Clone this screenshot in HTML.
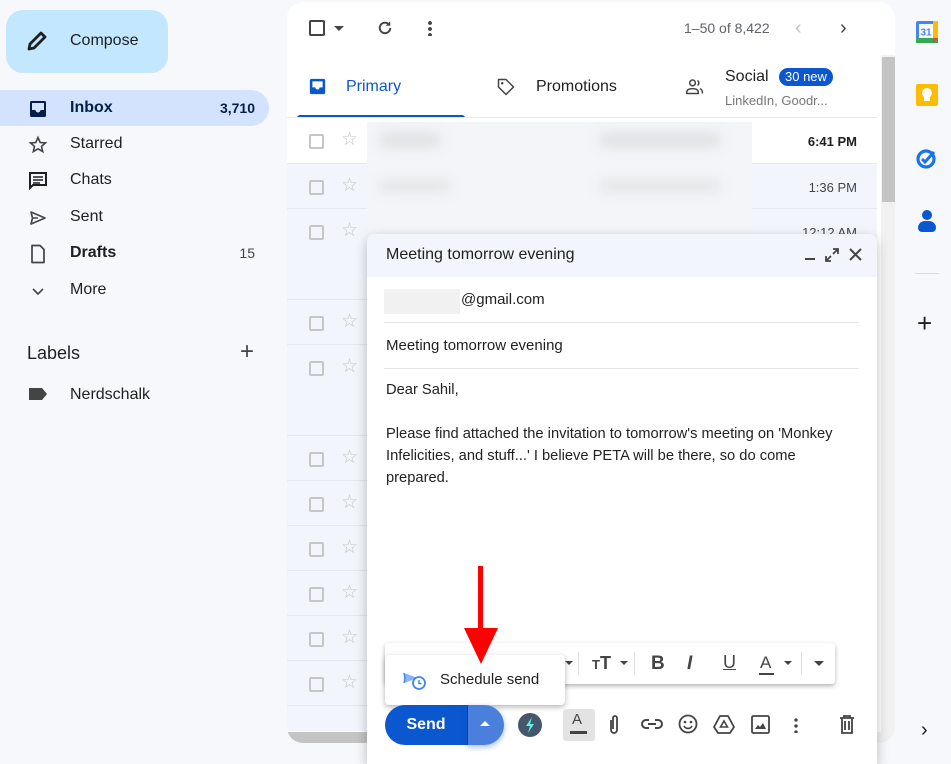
<!DOCTYPE html>
<html><head><meta charset="utf-8">
<style>
*{box-sizing:border-box;margin:0;padding:0}
body{width:951px;height:757px;overflow:hidden;background:#f6f8fc;font-family:"Liberation Sans",Arial,sans-serif;color:#1f1f1f;position:relative}
.abs{position:absolute}
.nav{position:absolute;left:0;width:269px;height:36px;display:flex;align-items:center;font-size:16px;color:#1f1f1f}
.nav .ic{position:absolute;left:28px;top:9px;width:20px;height:20px}
.nav .t{position:absolute;left:70px}
.nav .n{position:absolute;right:14px;font-size:14px}
.row{position:absolute;left:287px;width:590px;border-bottom:1px solid #e6e9ef;background:#f2f6fc}
.cb{position:absolute;left:22px;top:16px;width:15px;height:15px;border:2px solid #c4c7c5;border-radius:2px}
.st{position:absolute;left:54px;top:12px;font-size:19px;color:#c4c7c5;line-height:20px}
.time{position:absolute;right:20px;top:16px;font-size:13px;color:#444}
svg{display:block}
</style></head><body>

<div class="abs" style="left:6px;top:10px;width:162px;height:63px;background:#c2e7ff;border-radius:17px"></div>
<svg class="abs" style="left:25px;top:29px" width="24" height="24" viewBox="0 0 24 24"><path d="M4 20l1-5L16 4l4 4L9 19z" fill="none" stroke="#1f1f1f" stroke-width="2.8" stroke-linejoin="round"/></svg>
<div class="abs" style="left:70px;top:32px;font-size:16px;color:#1f1f1f">Compose</div>

<div class="nav" style="top:90px;background:#d3e3fd;border-radius:0 18px 18px 0">
 <svg class="ic" viewBox="0 0 20 20"><rect x="2" y="2" width="16" height="16" rx="1.5" fill="#041e49"/><path d="M4 4h12v7h-3.5a2.5 2.5 0 0 1-5 0H4z" fill="#d3e3fd"/></svg>
 <span class="t" style="font-weight:bold;color:#041e49">Inbox</span><span class="n" style="font-weight:bold;color:#041e49">3,710</span></div>
<div class="nav" style="top:126px"><svg class="ic" viewBox="0 0 20 20"><path d="M10 2.5l2.2 5 5.3.4-4 3.5 1.2 5.2L10 13.8 5.3 16.6l1.2-5.2-4-3.5 5.3-.4z" fill="none" stroke="#444" stroke-width="1.6"/></svg><span class="t">Starred</span></div>
<div class="nav" style="top:162px"><svg class="ic" viewBox="0 0 20 20"><path d="M2 2h16v12H5l-3 3z" fill="none" stroke="#1f1f1f" stroke-width="2"/><path d="M5 6h10M5 9h10M5 12h7" stroke="#1f1f1f" stroke-width="1.5"/></svg><span class="t">Chats</span></div>
<div class="nav" style="top:199px"><svg class="ic" viewBox="0 0 20 20"><path d="M3 4l14 6-14 6 1.5-6z" fill="none" stroke="#444" stroke-width="1.6" stroke-linejoin="round"/><path d="M4.5 10H10" stroke="#444" stroke-width="1.5"/></svg><span class="t">Sent</span></div>
<div class="nav" style="top:235px"><svg class="ic" viewBox="0 0 20 20"><path d="M4 1.5h8l4 4V18.5H4z" fill="none" stroke="#444" stroke-width="1.7" stroke-linejoin="round"/></svg><span class="t" style="font-weight:bold">Drafts</span><span class="n" style="color:#444">15</span></div>
<div class="nav" style="top:272px"><svg class="ic" viewBox="0 0 20 20"><path d="M5 8l5 5 5-5" fill="none" stroke="#444" stroke-width="1.6"/></svg><span class="t">More</span></div>
<div class="abs" style="left:27px;top:343px;font-size:18px;color:#1f1f1f">Labels</div>
<div class="abs" style="left:240px;top:340px;font-size:24px;color:#444;line-height:24px">+</div>
<svg class="abs" style="left:28px;top:387px" width="20" height="14" viewBox="0 0 20 14"><path d="M1 1h13l5 6-5 6H1z" fill="#444"/></svg>
<div class="abs" style="left:70px;top:386px;font-size:16px">Nerdschalk</div>

<div class="abs" style="left:287px;top:2px;width:608px;height:741px;background:#fff;border-radius:16px;overflow:hidden">
 <div class="abs" style="left:594px;top:53px;width:14px;height:690px;background:#f1f1f1"></div>
 <div class="abs" style="left:595px;top:55px;width:13px;height:145px;background:#c4c4c4"></div>
 <div class="abs" style="left:0;top:730px;width:594px;height:11px;background:#f1f1f1"></div>
 <div class="abs" style="left:0;top:730px;width:83px;height:11px;background:#c4c4c4;border-radius:0 0 0 8px"></div>
</div>
<div class="abs" style="left:309px;top:20px;width:16px;height:16px;border:2px solid #444;border-radius:2px"></div>
<div class="abs" style="left:334px;top:26px;width:0;height:0;border-left:5px solid transparent;border-right:5px solid transparent;border-top:5px solid #444"></div>
<svg class="abs" style="left:376px;top:19px" width="18" height="18" viewBox="0 0 24 24"><path d="M19 12a7 7 0 1 1-2-5" fill="none" stroke="#444" stroke-width="2.6"/><path d="M19 3v6h-6z" fill="#444"/></svg>
<div class="abs" style="left:428px;top:20px;width:4px;height:16px;background:radial-gradient(circle,#444 1.8px,transparent 2px) 0 0/4px 6px"></div>
<div class="abs" style="left:684px;top:20px;font-size:14px;color:#5f6368">1–50 of 8,422</div>
<div class="abs" style="left:795px;top:17px;font-size:20px;color:#c4c7c5">‹</div>
<div class="abs" style="left:840px;top:17px;font-size:20px;color:#444">›</div>

<svg class="abs" style="left:309px;top:78px" width="17" height="17" viewBox="0 0 20 20"><rect x="1" y="1" width="18" height="18" rx="2" fill="#0b57d0"/><path d="M4 4h12v7h-3.5a2.5 2.5 0 0 1-5 0H4z" fill="#fff"/></svg>
<div class="abs" style="left:346px;top:78px;font-size:16px;color:#0b57d0">Primary</div>
<div class="abs" style="left:297px;top:115px;width:168px;height:3px;background:#0b57d0;border-radius:3px 3px 0 0"></div>
<svg class="abs" style="left:496px;top:77px" width="20" height="20" viewBox="0 0 24 24"><path d="M3 3h9l9 9-9 9-9-9z" fill="none" stroke="#444" stroke-width="1.8" stroke-linejoin="round"/><circle cx="7.5" cy="7.5" r="1.5" fill="#444"/></svg>
<div class="abs" style="left:536px;top:78px;font-size:16px;color:#1f1f1f">Promotions</div>
<svg class="abs" style="left:685px;top:78px" width="20" height="18" viewBox="0 0 24 22"><circle cx="9" cy="6" r="3.5" fill="none" stroke="#444" stroke-width="1.8"/><path d="M2 19v-2c0-3 4-4 7-4s7 1 7 4v2z" fill="none" stroke="#444" stroke-width="1.8"/><path d="M15 3a3.5 3.5 0 0 1 0 6M18 13c2 1 3 2 3 4v2" fill="none" stroke="#444" stroke-width="1.8"/></svg>
<div class="abs" style="left:725px;top:68px;font-size:16px;color:#1f1f1f">Social</div>
<div class="abs" style="left:779px;top:68px;height:18px;padding:0 6px;background:#0b57d0;color:#fff;border-radius:9px;font-size:13px;line-height:18px">30 new</div>
<div class="abs" style="left:725px;top:93px;font-size:13px;color:#777">LinkedIn, Goodr...</div>
<div class="abs" style="left:287px;top:117px;width:590px;height:1px;background:#e6e9ef"></div>

<div class="row" style="top:118px;height:46px;background:#fff"><div class="cb"></div><div class="st">☆</div><div class="time" style="font-weight:bold;color:#1f1f1f">6:41 PM</div></div>
<div class="row" style="top:164px;height:45px"><div class="cb"></div><div class="st">☆</div><div class="time">1:36 PM</div></div>
<div class="row" style="top:209px;height:91px"><div class="cb"></div><div class="st">☆</div><div class="time">12:12 AM</div></div>
<div class="row" style="top:300px;height:45px"><div class="cb"></div><div class="st">☆</div></div>
<div class="row" style="top:345px;height:91px"><div class="cb"></div><div class="st">☆</div></div>
<div class="row" style="top:436px;height:45px"><div class="cb"></div><div class="st">☆</div></div>
<div class="row" style="top:481px;height:45px"><div class="cb"></div><div class="st">☆</div></div>
<div class="row" style="top:526px;height:45px"><div class="cb"></div><div class="st">☆</div></div>
<div class="row" style="top:571px;height:45px"><div class="cb"></div><div class="st">☆</div></div>
<div class="row" style="top:616px;height:45px"><div class="cb"></div><div class="st">☆</div></div>
<div class="row" style="top:661px;height:45px"><div class="cb"></div><div class="st">☆</div></div>
<div class="row" style="top:706px;height:25px;border:none"></div>
<div class="abs" style="left:367px;top:122px;width:385px;height:112px;background:#f3f5f9"></div>
<div class="abs" style="left:380px;top:133px;width:60px;height:14px;background:#e0e0e0;filter:blur(6px)"></div>
<div class="abs" style="left:600px;top:133px;width:120px;height:14px;background:#e0e0e0;filter:blur(6px)"></div>
<div class="abs" style="left:380px;top:180px;width:70px;height:12px;background:#e4e4e4;filter:blur(6px)"></div>
<div class="abs" style="left:600px;top:180px;width:120px;height:12px;background:#e4e4e4;filter:blur(6px)"></div>

<div class="abs" style="left:367px;top:234px;width:510px;height:530px;background:#fff;border-radius:8px 8px 0 0;box-shadow:0 4px 12px rgba(0,0,0,.25)">
 <div class="abs" style="left:0;top:0;width:510px;height:43px;background:#f2f6fc;border-radius:8px 8px 0 0"></div>
 <div class="abs" style="left:19px;top:12px;font-size:16px;color:#1f1f1f">Meeting tomorrow evening</div>
 <div class="abs" style="left:438px;top:24px;width:10px;height:2px;background:#444"></div>
 <svg class="abs" style="left:458px;top:14px" width="14" height="14" viewBox="0 0 14 14"><path d="M8 1h5v5M13 1L8 6M6 13H1V8M1 13l5-5" fill="none" stroke="#444" stroke-width="1.8"/></svg>
 <svg class="abs" style="left:482px;top:14px" width="13" height="13" viewBox="0 0 13 13"><path d="M1 1l11 11M12 1L1 12" stroke="#444" stroke-width="2"/></svg>
 <div class="abs" style="left:17px;top:55px;width:76px;height:25px;background:#f1f1f1"></div>
 <div class="abs" style="left:94px;top:57px;font-size:15px;color:#1f1f1f">@gmail.com</div>
 <div class="abs" style="left:17px;top:88px;width:475px;height:1px;background:#e6e6e6"></div>
 <div class="abs" style="left:19px;top:103px;font-size:15px;color:#1f1f1f">Meeting tomorrow evening</div>
 <div class="abs" style="left:17px;top:134px;width:475px;height:1px;background:#e6e6e6"></div>
 <div class="abs" style="left:19px;top:145px;font-size:14.7px;line-height:22px;color:#222;width:462px">Dear Sahil,<br><br>Please find attached the invitation to tomorrow's meeting on 'Monkey Infelicities, and stuff...' I believe PETA will be there, so do come prepared.</div>
</div>

<div class="abs" style="left:385px;top:643px;width:450px;height:41px;background:#fff;border-radius:3px;box-shadow:0 2px 5px rgba(0,0,0,.3)">
 <div class="abs" style="left:180px;top:18px;border-left:4px solid transparent;border-right:4px solid transparent;border-top:4px solid #444"></div>
 <div class="abs" style="left:193px;top:9px;width:1px;height:23px;background:#ddd"></div>
 <div class="abs" style="left:207px;top:10px;font-size:18px;font-weight:bold;color:#444"><span style="font-size:13px">T</span>T</div>
 <div class="abs" style="left:235px;top:18px;border-left:4px solid transparent;border-right:4px solid transparent;border-top:4px solid #444"></div>
 <div class="abs" style="left:249px;top:9px;width:1px;height:23px;background:#ddd"></div>
 <div class="abs" style="left:266px;top:10px;font-size:19px;font-weight:bold;color:#444">B</div>
 <div class="abs" style="left:302px;top:10px;font-size:19px;font-style:italic;font-weight:bold;color:#444">I</div>
 <div class="abs" style="left:338px;top:9px;font-size:18px;text-decoration:underline;color:#444">U</div>
 <div class="abs" style="left:375px;top:10px;font-size:17px;color:#444">A</div>
 <div class="abs" style="left:374px;top:30px;width:15px;height:2px;background:#444"></div>
 <div class="abs" style="left:399px;top:18px;border-left:4px solid transparent;border-right:4px solid transparent;border-top:4px solid #444"></div>
 <div class="abs" style="left:416px;top:9px;width:1px;height:23px;background:#ddd"></div>
 <div class="abs" style="left:429px;top:18px;border-left:5px solid transparent;border-right:5px solid transparent;border-top:5px solid #444"></div>
</div>
<div class="abs" style="left:385px;top:655px;width:180px;height:50px;background:#fff;border-radius:4px;box-shadow:0 2px 6px rgba(0,0,0,.3)">
 <svg class="abs" style="left:18px;top:16px" width="24" height="20" viewBox="0 0 24 20"><path d="M1 2l14 5-14 5 1-5z" fill="#8ab4f8"/><path d="M1 2l1 5-1 5" fill="none" stroke="#4285f4" stroke-width="1.5"/><circle cx="16" cy="12" r="6" fill="#fff" stroke="#4285f4" stroke-width="1.8"/><path d="M16 9v3.5h2.5" fill="none" stroke="#4285f4" stroke-width="1.5"/></svg>
 <div class="abs" style="left:55px;top:16px;font-size:15px;color:#1f1f1f">Schedule send</div>
</div>
<div class="abs" style="left:478px;top:566px;width:5px;height:70px;background:#f00"></div>
<div class="abs" style="left:464px;top:628px;width:0;height:0;border-left:17px solid transparent;border-right:17px solid transparent;border-top:36px solid #f00"></div>

<div class="abs" style="left:385px;top:705px;width:82px;height:40px;background:#0b57d0;border-radius:20px 0 0 20px;color:#fff;font-size:16px;font-weight:bold;text-align:center;line-height:40px">Send</div>
<div class="abs" style="left:467px;top:705px;width:37px;height:40px;background:#4a7fdc;border-left:1px solid #0842a0;border-radius:0 20px 20px 0;box-shadow:0 2px 6px rgba(11,87,208,.4)"></div>
<div class="abs" style="left:480px;top:721px;border-left:5px solid transparent;border-right:5px solid transparent;border-bottom:5px solid #fff"></div>
<div class="abs" style="left:518px;top:713px;width:24px;height:24px;border-radius:50%;background:#46566b"></div>
<svg class="abs" style="left:523px;top:716px" width="14" height="18" viewBox="0 0 14 18"><path d="M9 1L3 10h4l-2 7 6-9H7z" fill="#5ef0e8"/></svg>
<div class="abs" style="left:563px;top:709px;width:32px;height:32px;background:#e3e3e3;border-radius:3px"></div>
<div class="abs" style="left:572px;top:711px;font-size:15px;color:#444">A</div>
<div class="abs" style="left:570px;top:731px;width:17px;height:3px;background:#444"></div>
<svg class="abs" style="left:607px;top:714px" width="14" height="22" viewBox="0 0 14 22"><path d="M4 6v10a3 3 0 0 0 6 0V4a2 2 0 0 0-4 0v11" fill="none" stroke="#444" stroke-width="1.8"/></svg>
<svg class="abs" style="left:641px;top:717px" width="22" height="14" viewBox="0 0 22 14"><path d="M8 3H5a4 4 0 0 0 0 8h3M14 3h3a4 4 0 0 1 0 8h-3M7 7h8" fill="none" stroke="#444" stroke-width="2"/></svg>
<svg class="abs" style="left:678px;top:714px" width="20" height="20" viewBox="0 0 20 20"><circle cx="10" cy="10" r="8.5" fill="none" stroke="#444" stroke-width="1.8"/><circle cx="7" cy="8" r="1.3" fill="#444"/><circle cx="13" cy="8" r="1.3" fill="#444"/><path d="M6 12a4.5 4.5 0 0 0 8 0" fill="none" stroke="#444" stroke-width="1.6"/></svg>
<svg class="abs" style="left:713px;top:715px" width="22" height="19" viewBox="0 0 22 19"><path d="M7 1h8l6 11-4 6H5l-4-6z" fill="none" stroke="#444" stroke-width="1.8" stroke-linejoin="round"/><path d="M11 6l3.5 6h-7z" fill="none" stroke="#444" stroke-width="1.6"/></svg>
<svg class="abs" style="left:751px;top:715px" width="19" height="19" viewBox="0 0 19 19"><rect x="1" y="1" width="17" height="17" rx="1.5" fill="none" stroke="#444" stroke-width="1.8"/><path d="M4 14l3-4 2 2 3-4 3 6z" fill="#444"/></svg>
<div class="abs" style="left:794px;top:717px;width:4px;height:16px;background:radial-gradient(circle,#444 1.6px,transparent 1.9px) 0 0/4px 6px"></div>
<svg class="abs" style="left:839px;top:715px" width="16" height="19" viewBox="0 0 16 19"><path d="M1 3h14M5 3V1h6v2M3 3v15h10V3M6 6v9M10 6v9" fill="none" stroke="#444" stroke-width="1.8"/></svg>

<svg class="abs" style="left:916px;top:21px" width="22" height="22" viewBox="0 0 22 22"><rect x="0" y="0" width="22" height="22" rx="2" fill="#4285f4"/><rect x="0" y="17" width="22" height="5" fill="#34a853"/><rect x="17" y="0" width="5" height="17" fill="#fbbc04"/><rect x="3" y="3" width="14" height="14" fill="#fff"/><path d="M17 17h5l-5 5z" fill="#ea4335"/><text x="10" y="14.5" font-size="10" font-family="Liberation Sans" fill="#4285f4" text-anchor="middle" font-weight="bold">31</text></svg>
<div class="abs" style="left:916px;top:84px;width:22px;height:22px;background:#fbbc04;border-radius:2px"></div>
<div class="abs" style="left:922px;top:88px;width:10px;height:10px;background:#fff;border-radius:50%"></div>
<div class="abs" style="left:924px;top:97px;width:6px;height:4px;background:#fff"></div>
<svg class="abs" style="left:916px;top:147px" width="22" height="22" viewBox="0 0 22 22"><circle cx="10" cy="12" r="8" fill="none" stroke="#1a73e8" stroke-width="3.2"/><path d="M6 12l3 3 9-10" fill="none" stroke="#1a73e8" stroke-width="3"/></svg>
<div class="abs" style="left:922px;top:210px;width:10px;height:10px;border-radius:50%;background:#0b57d0"></div>
<div class="abs" style="left:918px;top:221px;width:18px;height:11px;border-radius:7px 7px 4px 4px;background:#0b57d0"></div>
<div class="abs" style="left:915px;top:273px;width:24px;height:1px;background:#dadce0"></div>
<div class="abs" style="left:917px;top:310px;font-size:26px;color:#1f1f1f;line-height:26px">+</div>
<div class="abs" style="left:921px;top:719px;font-size:20px;color:#1f1f1f">›</div>
</body></html>
